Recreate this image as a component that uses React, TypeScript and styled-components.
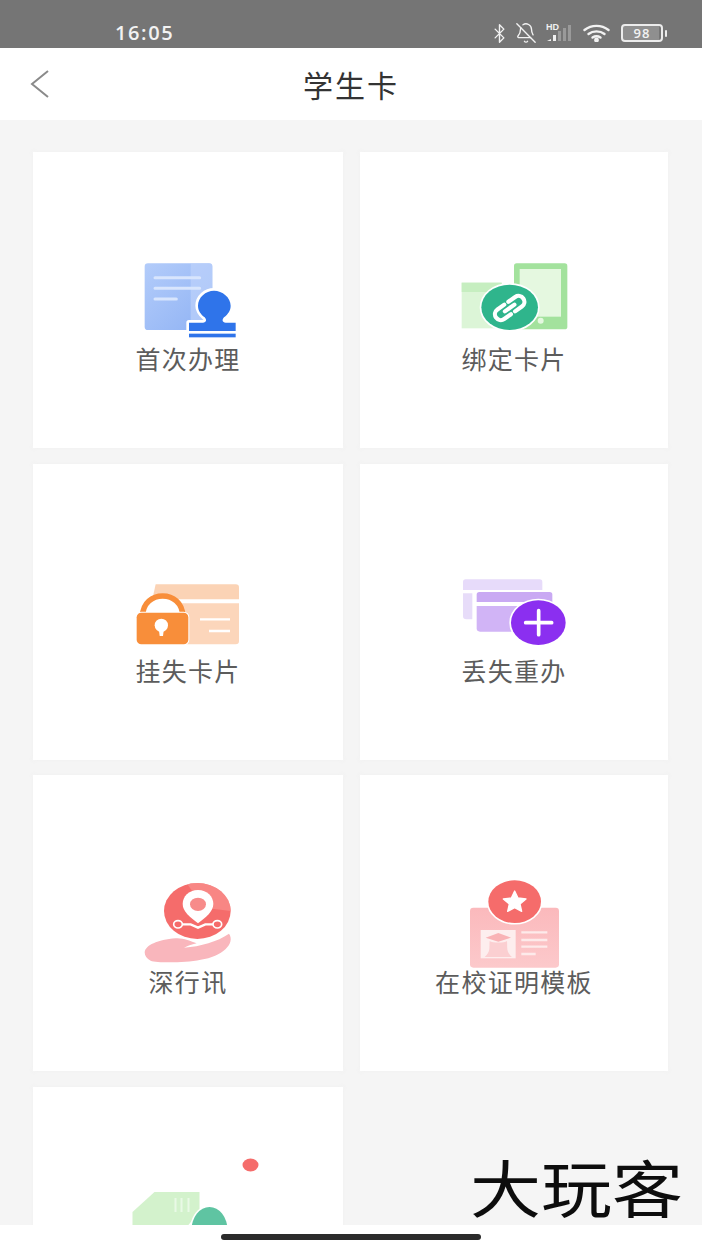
import { ReactNode } from "react";
import styled, { createGlobalStyle } from "styled-components";
import { Bluetooth, BellOff } from "lucide-react";

const GlobalStyle = createGlobalStyle`
  html, body {
    margin: 0;
    padding: 0;
    background: #f5f5f5;
    font-family: "Noto Sans CJK SC", "Noto Sans", sans-serif;
  }
`;

const Page = styled.div`
  position: relative;
  width: 702px;
  height: 1248px;
  display: flex;
  flex-direction: column;
  overflow: hidden;
  background: #f5f5f5;
`;

const StatusBar = styled.div`
  height: 48px;
  flex: none;
  display: flex;
  align-items: center;
  padding: 18px 0 0 115px;
  box-sizing: border-box;
  background: #757575;
  color: #f2f2f2;
`;

const Time = styled.span`
  font-family: "Open Sans", sans-serif;
  font-size: 20px;
  font-weight: 600;
  letter-spacing: 1.6px;
  line-height: 30px;
`;

const StatusIcons = styled.div`
  margin-left: auto;
  margin-right: 35px;
  display: flex;
  align-items: center;
  gap: 9px;
`;

const BluetoothIcon = styled(Bluetooth)`
  margin-right: -4px;
`;

const Battery = styled.div`
  position: relative;
  width: 38px;
  height: 14px;
  margin-left: 2px;
  border: 2px solid #ececec;
  border-radius: 4px;
  display: flex;
  align-items: center;
  justify-content: center;
  font-family: "Open Sans", sans-serif;
  font-size: 13px;
  font-weight: 600;
  letter-spacing: 1px;
  color: #f2f2f2;
  background: linear-gradient(90deg, #8f8f8f 0 94%, #757575 94%);
`;

const BatteryTip = styled.div`
  width: 2px;
  height: 7px;
  margin-left: -7px;
  background: #ececec;
  border-radius: 1px;
`;

const NavBar = styled.div`
  height: 72px;
  flex: none;
  display: grid;
  grid-template-columns: 1fr auto 1fr;
  align-items: center;
  background: #fff;
`;

const BackButton = styled.div`
  padding-left: 29px;
  display: flex;
`;

const Title = styled.h1`
  margin: 0;
  font-size: 30px;
  font-weight: 400;
  letter-spacing: 2px;
  color: #333;
`;

const Content = styled.div`
  flex: 1;
  min-height: 0;
  overflow: hidden;
  padding: 32px 34px 0 33px;
  display: grid;
  grid-template-columns: 310px 308px;
  grid-auto-rows: 296px;
  column-gap: 17px;
  row-gap: 15.6px;
`;

const Card = styled.div`
  display: flex;
  flex-direction: column;
  align-items: center;
  justify-content: flex-end;
  padding-bottom: 74px;
  box-sizing: border-box;
  background: #fff;
  box-shadow: 0 0 4px rgba(240, 240, 240, 0.9);
`;

const IconSvg = styled.svg`
  flex: none;
  display: block;
  width: 135px;
  height: ${(p) => p.height ?? 80}px;
  overflow: visible;
`;

const Label = styled.div`
  height: 32px;
  margin-top: 2px;
  font-size: 25px;
  line-height: 32px;
  letter-spacing: 1.3px;
  color: #5c5c5c;
  white-space: nowrap;
`;

const HomeBar = styled.div`
  height: 23px;
  flex: none;
  display: flex;
  align-items: center;
  justify-content: center;
  background: #fff;
`;

const HomePill = styled.div`
  width: 260px;
  height: 6px;
  margin-top: 1px;
  border-radius: 3px;
  background: #2b2b2b;
`;

const Watermark = styled.div`
  position: absolute;
  left: 470px;
  top: 1145px;
  font-size: 71px;
  line-height: 82px;
  color: #0d0d0d;
  white-space: nowrap;
  transform: scaleY(0.88);
`;

const Grad = ({ id, from, to }: { id: string; from: string; to: string }) => (
  <linearGradient id={id} x1="0" y1="0" x2="1" y2="1">
    <stop offset="0" stopColor={from} />
    <stop offset="1" stopColor={to} />
  </linearGradient>
);

const Icon = ({ box, height, children }: { box: string; height?: number; children: ReactNode }) => (
  <IconSvg viewBox={box} height={height}>
    {children}
  </IconSvg>
);

const FirstIcon = () => (
  <Icon box="1 30 405 240">
    <defs>
      <Grad id="doc" from="#b3ccfa" to="#8fb2f4" />
    </defs>
    <rect x="72" y="40" width="203" height="200" rx="10" fill="url(#doc)" />
    <path d="M210 40h55a10 10 0 0 1 10 10v190h-65z" fill="#c3d6fb" opacity="0.6" />
    <path d="M103 83h134M103 115h134M103 147h64" stroke="#d8e5fd" strokeWidth="9" strokeLinecap="round" />
    <path
      d="M205 218v25h140v-25h-30c-10 0-12-8-5-16 12-10 20-20 20-35 0-25-25-45-50-45s-48 20-48 45c0 15 8 25 20 35 7 8 5 16-5 16z"
      fill="#2f74ea"
      stroke="#fff"
      strokeWidth="16"
      paintOrder="stroke"
      strokeLinejoin="round"
    />
    <rect x="205" y="251" width="140" height="11" fill="#2f74ea" />
  </Icon>
);

const BindIcon = () => (
  <Icon box="4 30 405 240">
    <rect x="205" y="40" width="160" height="198" rx="8" fill="#a3e29d" />
    <rect x="222" y="57" width="124" height="143" fill="#e5f8e0" />
    <circle cx="285" cy="212" r="9" fill="#e5f8e0" />
    <rect x="48" y="98" width="120" height="137" fill="#dcf5d7" />
    <rect x="48" y="98" width="120" height="28" fill="#c6eec0" />
    <ellipse cx="192" cy="172" rx="85" ry="68" fill="#2fb58c" stroke="#fff" strokeWidth="10" paintOrder="stroke" />
    <g transform="translate(192 174) rotate(-35) scale(1.25)" fill="none" stroke="#fff" strokeWidth="10" strokeLinecap="round">
      <path d="M-6 -14h-20a14 14 0 0 0 0 28h20" />
      <path d="M6 14h20a14 14 0 0 0 0-28h-20" />
      <path d="M-14 0h28" />
    </g>
  </Icon>
);

const LockIcon = () => (
  <Icon box="1 18 405 240">
    <path d="M105 55h240a10 10 0 0 1 10 10v35h-260z" fill="#fbd3b5" />
    <path d="M165 112h190v113a10 10 0 0 1-10 10h-180z" fill="#fcd6bb" />
    <path d="M238 160h90M265 195h63" stroke="#fff" strokeWidth="7" />
    <path d="M66 150C66 70 186 70 186 150" fill="#fff" stroke="#f88e3a" strokeWidth="17" />
    <rect x="48" y="140" width="155" height="95" rx="14" fill="#f88e3a" stroke="#fff" strokeWidth="6" paintOrder="stroke" />
    <circle cx="122" cy="178" r="20" fill="#fff" />
    <path d="M114 185h16l-3 25h-10z" fill="#fff" />
  </Icon>
);

const ReissueIcon = () => (
  <Icon box="4 18 405 240">
    <path d="M60 40h222a8 8 0 0 1 8 8v24h-238v-24a8 8 0 0 1 8-8z" fill="#e7dbfa" />
    <path d="M52 82h28v78h-18a10 10 0 0 1-10-10z" fill="#e7dcf9" />
    <path d="M101 78h211a8 8 0 0 1 8 8v22h-227v-22a8 8 0 0 1 8-8z" fill="#c9a9f3" />
    <path d="M93 120h227v77h-217a10 10 0 0 1-10-10z" fill="#d1b4f6" />
    <ellipse cx="278" cy="170" rx="82" ry="67" fill="#8b2ff0" stroke="#fff" strokeWidth="10" paintOrder="stroke" />
    <path d="M240 170h78M279 134v72" stroke="#fff" strokeWidth="11" strokeLinecap="round" />
  </Icon>
);

const RouteIcon = () => (
  <Icon box="1 24 405 240">
    <ellipse cx="230" cy="108" rx="100" ry="84" fill="#f56c6b" />
    <path d="M200 28a100 84 0 0 1 130 80l-80-10z" fill="#f88f8c" opacity="0.75" />
    <path
      d="M232 45c28 0 46 20 46 42 0 22-22 40-46 58-24-18-46-36-46-58 0-22 18-42 46-42z"
      fill="#fff"
    />
    <ellipse cx="232" cy="88" rx="24" ry="20" fill="#f78b8a" />
    <path d="M172 148h38l22 10 22-10h38" fill="none" stroke="#fff" strokeWidth="7" strokeLinecap="round" />
    <ellipse cx="172" cy="148" rx="13" ry="11" fill="#f56c6b" stroke="#fff" strokeWidth="5" />
    <ellipse cx="290" cy="148" rx="13" ry="11" fill="#f56c6b" stroke="#fff" strokeWidth="5" />
    <path
      d="M72 232C75 210 110 195 165 190C185 188 210 198 228 205C212 209 200 213 190 218C240 214 290 200 325 176C345 205 305 245 240 254C190 264 110 264 90 257C78 252 72 242 72 232z"
      fill="#f9b6bc"
      stroke="#fff"
      strokeWidth="4"
      paintOrder="stroke"
    />
  </Icon>
);

const ProofIcon = () => (
  <Icon box="49 24 405 240">
    <defs>
      <linearGradient id="proof" x1="0" y1="0" x2="0" y2="1">
        <stop offset="0" stopColor="#fbb9bc" />
        <stop offset="1" stopColor="#fcc9cb" />
      </linearGradient>
    </defs>
    <rect x="118" y="98" width="267" height="180" rx="10" fill="url(#proof)" />
    <ellipse cx="252" cy="80" rx="79" ry="64" fill="#f56c6b" stroke="#fff" strokeWidth="9" paintOrder="stroke" />
    <path
      d="M252 48l10 21 24 3-18 15 5 22-21-11-21 11 5-22-18-15 24-3z"
      fill="#fff"
      stroke="#fff"
      strokeLinejoin="round"
      strokeWidth="4"
    />
    <rect x="150" y="165" width="105" height="85" fill="#fdeeee" />
    <path d="M165 188l38-14 38 14-38 12z" fill="#f9b3b6" />
    <path d="M177 198c-2 18 4 32-15 48h82c-19-16-13-30-15-48-8 6-44 6-52 0z" fill="#fbcfd1" />
    <path d="M272 172h78M272 195h78M272 215h78M272 237h43" stroke="#fdeaea" strokeWidth="7" />
  </Icon>
);

const ExtraIcon = () => (
  <Icon box="120.5 1155 135 120" height={120}>
    <ellipse cx="250" cy="1165" rx="8" ry="6.5" fill="#f56c6b" />
    <path d="M132 1212l22-20h45v20l-12 14h-55z" fill="#d3f2cc" />
    <path d="M175 1198v14M181 1198v14M188 1198v14" stroke="#e9f9e6" strokeWidth="2" />
    <ellipse cx="209" cy="1230" rx="18" ry="23" fill="#5fc4a2" stroke="#fff" strokeWidth="3" paintOrder="stroke" />
  </Icon>
);

const Signal = () => (
  <svg width="28" height="22" viewBox="0 0 28 22" fill="none">
    <text x="0" y="8" fontFamily="Liberation Sans, sans-serif" fontSize="9" fontWeight="700" fill="#f0f0f0">
      HD
    </text>
    <path d="M1 19h4v-2z" fill="#f0f0f0" />
    <rect x="7" y="13" width="3" height="6" fill="#f0f0f0" />
    <rect x="12" y="9" width="3" height="10" fill="#9a9a9a" />
    <rect x="17" y="6" width="3" height="13" fill="#9a9a9a" />
    <rect x="22" y="3" width="3" height="16" fill="#9a9a9a" />
  </svg>
);

const Wifi = () => (
  <svg width="27" height="18" viewBox="0 0 27 18" fill="none" stroke="#f2f2f2" strokeWidth="2.4" strokeLinecap="round">
    <path d="M1.5 6c7-5.500 17-5.500 24 0" />
    <path d="M5.500 10c4.500-3.500 11.500-3.500 16 0" />
    <path d="M9.500 13.500c2.500-1.600 5.500-1.600 8 0" />
    <circle cx="13.500" cy="16" r="1.200" fill="#f2f2f2" />
  </svg>
);

const items = [
  { label: "首次办理", icon: <FirstIcon /> },
  { label: "绑定卡片", icon: <BindIcon /> },
  { label: "挂失卡片", icon: <LockIcon /> },
  { label: "丢失重办", icon: <ReissueIcon /> },
  { label: "深行讯", icon: <RouteIcon /> },
  { label: "在校证明模板", icon: <ProofIcon /> },
  { label: "", icon: <ExtraIcon /> },
];

const App = () => (
  <Page>
    <GlobalStyle />
    <StatusBar>
      <Time>16:05</Time>
      <StatusIcons>
        <BluetoothIcon size={21} strokeWidth={1.6} color="#f2f2f2" />
        <BellOff size={22} strokeWidth={1.5} color="#f2f2f2" />
        <Signal />
        <Wifi />
        <Battery>98</Battery>
        <BatteryTip />
      </StatusIcons>
    </StatusBar>
    <NavBar>
      <BackButton>
        <svg width="22" height="30" viewBox="0 0 22 30" fill="none" stroke="#8a8a8a" strokeWidth="2">
          <path d="M19 2L3 15l16 13" />
        </svg>
      </BackButton>
      <Title>学生卡</Title>
    </NavBar>
    <Content>
      {items.map((item, index) => (
        <Card key={index}>
          {item.icon}
          <Label>{item.label}</Label>
        </Card>
      ))}
    </Content>
    <HomeBar>
      <HomePill />
    </HomeBar>
    <Watermark>大玩客</Watermark>
  </Page>
);

export default App;
